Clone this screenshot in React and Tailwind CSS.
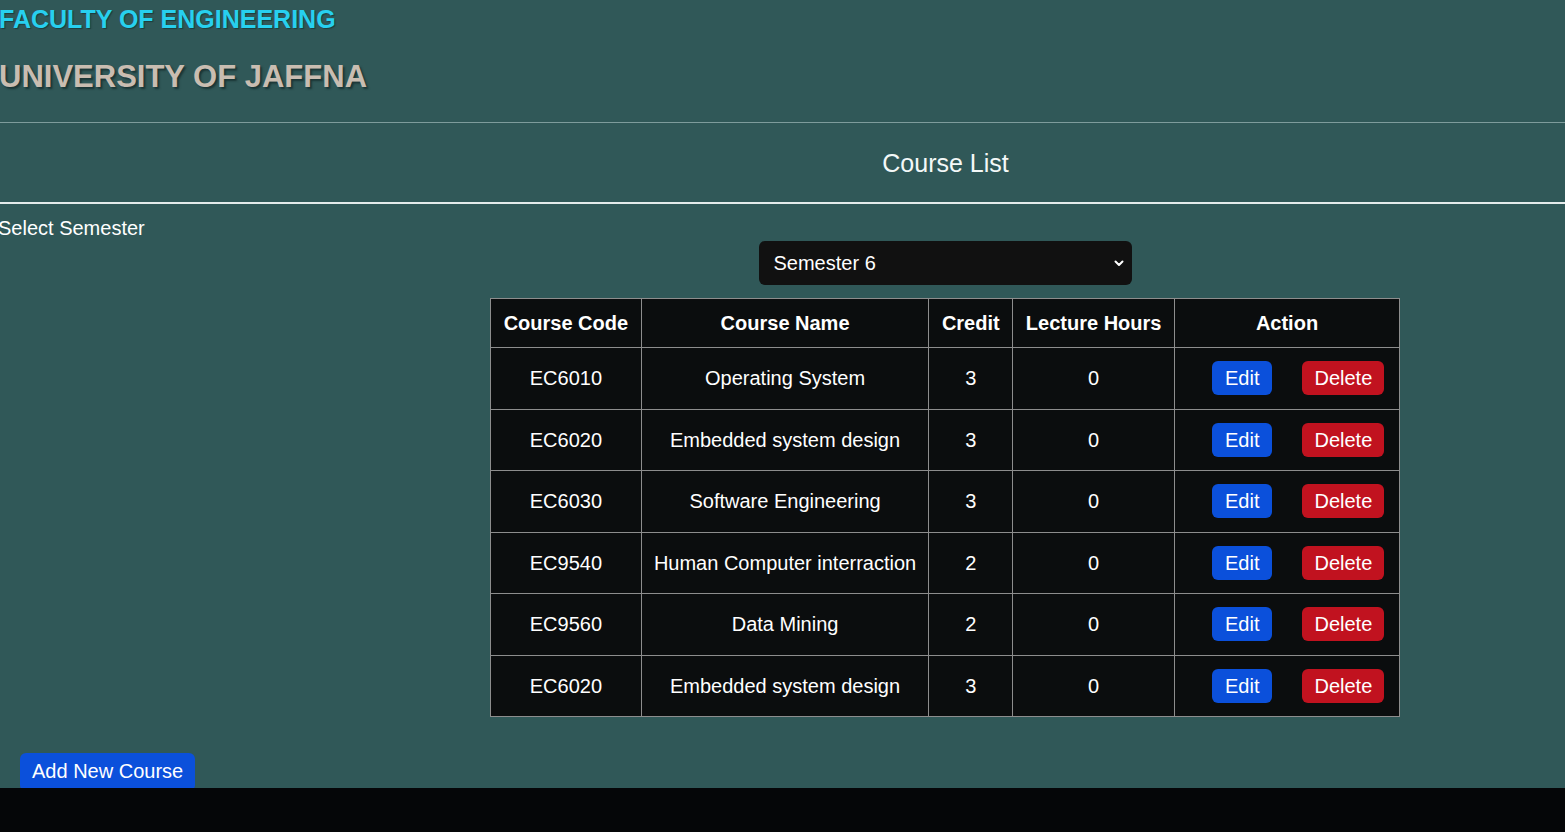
import React, { useState } from 'react'

const courses = [
  { code: 'EC6010', name: 'Operating System', credit: 3, hours: 0 },
  { code: 'EC6020', name: 'Embedded system design', credit: 3, hours: 0 },
  { code: 'EC6030', name: 'Software Engineering', credit: 3, hours: 0 },
  { code: 'EC9540', name: 'Human Computer interraction', credit: 2, hours: 0 },
  { code: 'EC9560', name: 'Data Mining', credit: 2, hours: 0 },
  { code: 'EC6020', name: 'Embedded system design', credit: 3, hours: 0 },
]

function App() {
  const [semester, setSemester] = useState('6')

  const cell = 'border border-[#8d8d8d] text-center align-middle'

  return (
    <div className="h-[832px] bg-[#050608] font-['Liberation_Sans',Arial,sans-serif] text-white overflow-hidden">
      <div className="h-[788px] bg-[#305858] overflow-hidden">
        {/* header */}
        <div className="h-[122px]">
          <div className="pt-[5px] text-[25px] leading-[29px] font-bold text-[#27d0ef] -ml-[1px] [text-shadow:1px_1px_1px_#1d3c3c]">
            FACULTY OF ENGINEERING
          </div>
          <div className="mt-[25px] text-[31px] leading-[36px] font-bold text-[#c9bdb1] -ml-[1px] [text-shadow:2px_2px_2px_#1b3535]">
            UNIVERSITY OF JAFFNA
          </div>
        </div>
        <div className="h-px bg-[#7e9c9c]" />

        <div className="h-[79px] flex items-center justify-center pl-[326px]">
          <h2 className="text-[25px] leading-[30px] text-[#f4f8f8]">Course List</h2>
        </div>
        <div className="h-[2px] bg-[#e4ebeb]" />

        <div className="mt-[12px] -ml-[2px] text-[20px] leading-[24px]">Select Semester</div>

        <div className="pl-[325px] flex flex-col items-center">
          <div className="relative mt-[1px] w-[373px]">
            <select
              value={semester}
              onChange={e => setSemester(e.target.value)}
              className="appearance-none w-full h-[44px] rounded-[6px] bg-[#111111] pl-[15px] text-[20px] text-white outline-none"
            >
              {[1, 2, 3, 4, 5, 6, 7, 8].map(n => (
                <option key={n} value={String(n)}>Semester {n}</option>
              ))}
            </select>
            <svg className="absolute right-[7px] top-1/2 -translate-y-1/2 w-[12px] h-[12px] pointer-events-none" viewBox="0 0 12 12" fill="none" stroke="white" strokeWidth="2" strokeLinecap="round" strokeLinejoin="round">
              <path d="M2.5 4.5 6 8 9.5 4.5" />
            </svg>
          </div>

          <table className="mt-[13px] w-[910px] border-collapse bg-[#0b0d0e] text-[20px] leading-[24px] border border-[#8d8d8d]">
            <thead>
              <tr className="h-[49px] font-bold">
                <th className={cell + ' w-[151px]'}>Course Code</th>
                <th className={cell + ' w-[288px]'}>Course Name</th>
                <th className={cell + ' w-[84px]'}>Credit</th>
                <th className={cell + ' w-[162px]'}>Lecture Hours</th>
                <th className={cell + ' w-[225px]'}>Action</th>
              </tr>
            </thead>
            <tbody>
              {courses.map((c, i) => (
                <tr key={i} className="h-[61.5px]">
                  <td className={cell}>{c.code}</td>
                  <td className={cell}>{c.name}</td>
                  <td className={cell}>{c.credit}</td>
                  <td className={cell}>{c.hours}</td>
                  <td className={cell}>
                    <div className="flex items-center pl-[37px] gap-[30px]">
                      <button className="h-[34px] px-[13px] rounded-[6px] bg-[#0b50db] text-white">Edit</button>
                      <button className="h-[34px] px-[12px] rounded-[6px] bg-[#c1121f] text-white">Delete</button>
                    </div>
                  </td>
                </tr>
              ))}
            </tbody>
          </table>
        </div>

        <button className="mt-[36px] ml-[20px] h-[38px] px-[12px] rounded-[6px] bg-[#0b50db] text-[20px] leading-[24px] pb-[3px] text-white">
          Add New Course
        </button>
      </div>
    </div>
  )
}

export default App
